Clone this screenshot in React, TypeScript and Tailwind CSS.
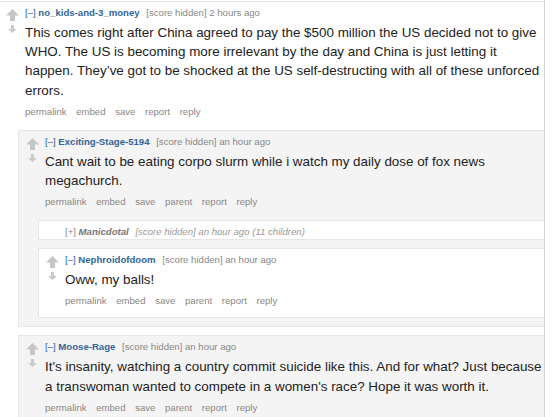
import React from "react";

function UpArrow() {
  return (
    <svg width="13" height="12" viewBox="0 0 13 12" className="block">
      <path d="M6.5 0 L13 6.5 H9 V12 H4 V6.5 H0 Z" fill="#c6c6c6" />
    </svg>
  );
}

function DownArrow() {
  return (
    <svg width="9" height="8" viewBox="0 0 9 8" className="block">
      <path d="M3 0 H6 V4 H9 L4.5 8 L0 4 H3 Z" fill="#cacaca" />
    </svg>
  );
}

type CommentProps = {
  author: string;
  time: string;
  body: string;
  buttons: string[];
  bg: string;
  top?: boolean;
  children?: React.ReactNode;
};

function Comment({ author, time, body, buttons, bg, top, children }: CommentProps) {
  return (
    <div
      className={`${bg} border-t border-b border-[#e6e6e6] ${top ? "" : "border-l mb-[8px]"}`}
    >
      <div className={`flex pt-[4px] ${top ? "pl-[5px]" : "pl-[6px]"}`}>
        <div className="w-[14px] mr-[6px] flex flex-col items-center gap-[4px] pt-[3px] shrink-0">
          <UpArrow />
          <DownArrow />
        </div>
        <div className={`flex-1 min-w-0 pr-[1px] ${children ? "pb-[11px]" : "pb-[9px]"}`}>
          <div className="text-[9.6px] leading-[14px] text-[#888] whitespace-nowrap">
            <span className="text-[#369]">[–]</span>{" "}
            <span className="font-bold text-[#369]">{author}</span>{" "}
            <span className="ml-[4px]">[score hidden]</span> <span>{time}</span>
          </div>
          <p className="mt-[3px] text-[13.4px] leading-[19.2px] text-[#222]">{body}</p>
          <div className="mt-[5px] flex gap-[9.6px] text-[9.6px] leading-[14px] text-[#888]">
            {buttons.map((b) => (
              <span key={b}>{b}</span>
            ))}
          </div>
        </div>
      </div>
      {children && <div className={top ? "ml-[18px]" : "ml-[19px]"}>{children}</div>}
    </div>
  );
}

function Collapsed() {
  return (
    <div className="bg-white border-t border-b border-l border-[#e6e6e6] mb-[8px] pl-[26px] pt-[4px]">
      <div className="text-[9.6px] leading-[14px] italic text-[#999] whitespace-nowrap">
        <span className="not-italic text-[#888]">[+]</span>{" "}
        <span className="font-bold text-[#777]">Manicdotal</span>{" "}
        <span className="ml-[4px]">[score hidden]</span> <span>an hour ago</span>{" "}
        <span>(11 children)</span>
      </div>
    </div>
  );
}

export default function App() {
  const reply5 = ["permalink", "embed", "save", "parent", "report", "reply"];
  return (
    <div className="w-[552px] h-[417px] overflow-hidden bg-white font-['Liberation_Sans',Arial,sans-serif]">
      <div className="w-[545px] border-r border-[#d6d6d6] pt-[1px] min-h-[417px]">
        <Comment
          top
          bg="bg-white"
          author="no_kids-and-3_money"
          time="2 hours ago"
          body="This comes right after China agreed to pay the $500 million the US decided not to give WHO. The US is becoming more irrelevant by the day and China is just letting it happen. They’ve got to be shocked at the US self-destructing with all of these unforced errors."
          buttons={["permalink", "embed", "save", "report", "reply"]}
        >
          <Comment
            bg="bg-[#f4f4f4]"
            author="Exciting-Stage-5194"
            time="an hour ago"
            body="Cant wait to be eating corpo slurm while i watch my daily dose of fox news megachurch."
            buttons={reply5}
          >
            <Collapsed />
            <Comment
              bg="bg-white"
              author="Nephroidofdoom"
              time="an hour ago"
              body="Oww, my balls!"
              buttons={reply5}
            />
          </Comment>
          <Comment
            bg="bg-[#f4f4f4]"
            author="Moose-Rage"
            time="an hour ago"
            body="It's insanity, watching a country commit suicide like this. And for what? Just because a transwoman wanted to compete in a women's race? Hope it was worth it."
            buttons={reply5}
          />
        </Comment>
      </div>
    </div>
  );
}
